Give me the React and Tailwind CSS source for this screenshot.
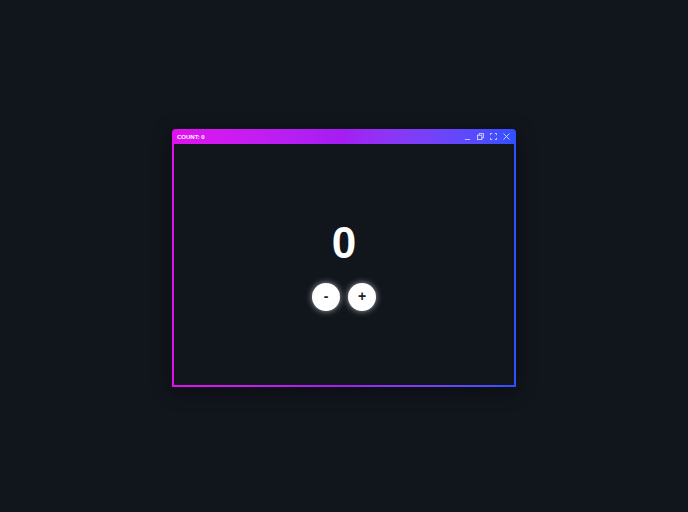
import { useState } from "react";

export default function App() {
    const [count, setCount] = useState(0);

    return (
        <div
            className="min-h-screen w-full bg-[#11151c] flex items-center justify-center pt-[4px]"
            style={{ fontFamily: "'Liberation Sans', Arial, sans-serif" }}
        >
            <div className="w-[344px] h-[258px] rounded-t-[4px] bg-gradient-to-r from-[#e20ff0] via-[#a41df3] to-[#2f50ff] px-[2px] pb-[2px] flex flex-col shadow-[0_4px_20px_rgba(0,0,0,0.35)]">
                <div className="h-[15px] flex items-center justify-between pl-[3px] pr-[4px]">
                    <span className="text-[6px] font-bold text-white leading-none">
                        COUNT: {count}
                    </span>
                    <div className="flex items-center gap-[6px] text-white/80">
                        <svg width="7" height="7" viewBox="0 0 8 8" fill="none" stroke="currentColor" strokeWidth="1">
                            <path d="M1 7.5h6" />
                        </svg>
                        <svg width="7" height="7" viewBox="0 0 8 8" fill="none" stroke="currentColor" strokeWidth="1">
                            <rect x="0.5" y="2.5" width="5" height="5" />
                            <path d="M2.5 2.5V0.5h5v5h-2" />
                        </svg>
                        <svg width="7" height="7" viewBox="0 0 8 8" fill="none" stroke="currentColor" strokeWidth="1">
                            <path d="M0.5 2.5v-2h2M5.5 0.5h2v2M7.5 5.5v2h-2M2.5 7.5h-2v-2" />
                        </svg>
                        <svg width="7" height="7" viewBox="0 0 8 8" fill="none" stroke="currentColor" strokeWidth="1">
                            <path d="M0.5 0.5l7 7M7.5 0.5l-7 7" />
                        </svg>
                    </div>
                </div>
                <div className="flex-1 bg-[#11151c] flex flex-col items-center justify-center pt-[2px]">
                    <div className="text-[44px] font-bold text-white leading-none">{count}</div>
                    <div className="flex items-center gap-[8px] mt-[18px]">
                        <button
                            onClick={() => setCount(count - 1)}
                            className="w-[28px] h-[28px] rounded-full bg-white text-[#222] text-[14px] font-bold flex items-center justify-center shadow-[0_0_6px_rgba(255,255,255,0.6)]"
                        >
                            -
                        </button>
                        <button
                            onClick={() => setCount(count + 1)}
                            className="w-[28px] h-[28px] rounded-full bg-white text-[#222] text-[14px] font-bold flex items-center justify-center shadow-[0_0_6px_rgba(255,255,255,0.6)]"
                        >
                            +
                        </button>
                    </div>
                </div>
            </div>
        </div>
    );
}
